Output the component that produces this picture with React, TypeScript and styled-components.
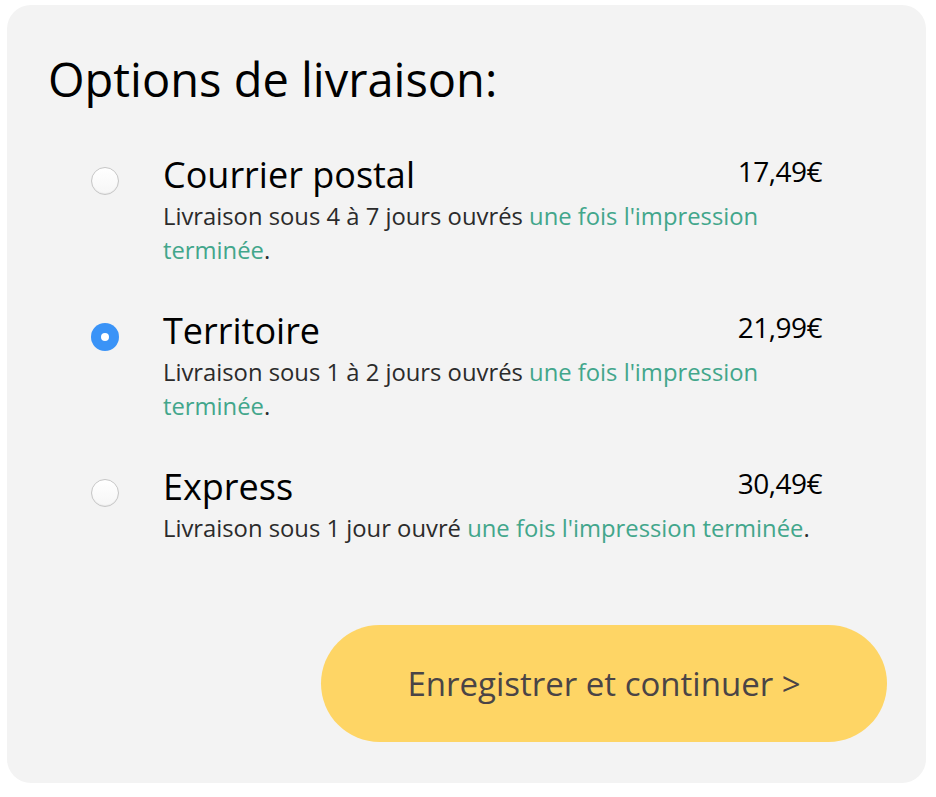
import React, { useState } from "react";
import styled, { createGlobalStyle } from "styled-components";

const Global = createGlobalStyle`
  html, body { margin: 0; padding: 0; background: #ffffff; }
  body { font-family: "Open Sans", "Noto Sans", sans-serif; -webkit-font-smoothing: antialiased; }
`;

const Panel = styled.div`
  box-sizing: border-box;
  margin: 5px 0 0 7px;
  width: 919px;
  background: #f3f3f3;
  border-radius: 24px;
  padding: 46px 39px 41px 41px;
  display: flex;
  flex-direction: column;
`;

const Title = styled.h1`
  margin: 0 0 46px 0;
  font-size: 47px;
  line-height: 56px;
  font-weight: 400;
  color: #000;
`;

const List = styled.div`
  display: flex;
  flex-direction: column;
  gap: 42px;
  padding-left: 43px;
  padding-right: 65px;
`;

const Row = styled.label`
  display: grid;
  grid-template-columns: 28px 1fr;
  column-gap: 44px;
  cursor: pointer;
`;

const Radio = styled.span<{ $checked: boolean }>`
  box-sizing: border-box;
  margin-top: 14px;
  width: 28px;
  height: 28px;
  border-radius: 50%;
  display: flex;
  align-items: center;
  justify-content: center;
  background: ${(p) => (p.$checked ? "#3a93f7" : "linear-gradient(#ffffff, #f6f6f6)")};
  border: ${(p) => (p.$checked ? "none" : "1px solid #c6c6c6")};
  box-shadow: ${(p) => (p.$checked ? "none" : "inset 0 -1px 1px rgba(0,0,0,0.05)")};
  &::after {
    content: "";
    display: ${(p) => (p.$checked ? "block" : "none")};
    width: 8px;
    height: 8px;
    border-radius: 50%;
    background: #fff;
  }
`;

const Body = styled.div`
  display: flex;
  flex-direction: column;
`;

const Head = styled.div`
  display: flex;
  justify-content: space-between;
  align-items: flex-start;
`;

const Name = styled.span`
  font-size: 36px;
  line-height: 44px;
  color: #000;
`;

const Price = styled.span`
  font-size: 28px;
  line-height: 36px;
  color: #000;
  letter-spacing: -0.5px;
`;

const Desc = styled.p`
  margin: 2px 0 0 0;
  font-size: 23.8px;
  line-height: 34px;
  color: #2b2b2b;
`;

const Link = styled.span`
  color: #42a68b;
`;

const Footer = styled.div`
  display: flex;
  justify-content: flex-end;
  margin-top: 80px;
`;

const Button = styled.button`
  width: 566px;
  height: 117px;
  border: none;
  border-radius: 59px;
  background: #fed565;
  color: #4a4446;
  font-family: "Open Sans", "Noto Sans", sans-serif;
  font-size: 33px;
  cursor: pointer;
`;

const options = [
  { name: "Courrier postal", price: "17,49€", delay: "Livraison sous 4 à 7 jours ouvrés" },
  { name: "Territoire", price: "21,99€", delay: "Livraison sous 1 à 2 jours ouvrés" },
  { name: "Express", price: "30,49€", delay: "Livraison sous 1 jour ouvré" },
];

export default function App() {
  const [selected, setSelected] = useState(1);
  return (
    <>
      <Global />
      <Panel>
        <Title>Options de livraison:</Title>
        <List>
          {options.map((o, i) => (
            <Row key={o.name} onClick={() => setSelected(i)}>
              <Radio $checked={selected === i} />
              <Body>
                <Head>
                  <Name>{o.name}</Name>
                  <Price>{o.price}</Price>
                </Head>
                <Desc>
                  {o.delay} <Link>une fois l'impression terminée</Link>.
                </Desc>
              </Body>
            </Row>
          ))}
        </List>
        <Footer>
          <Button>Enregistrer et continuer &gt;</Button>
        </Footer>
      </Panel>
    </>
  );
}
